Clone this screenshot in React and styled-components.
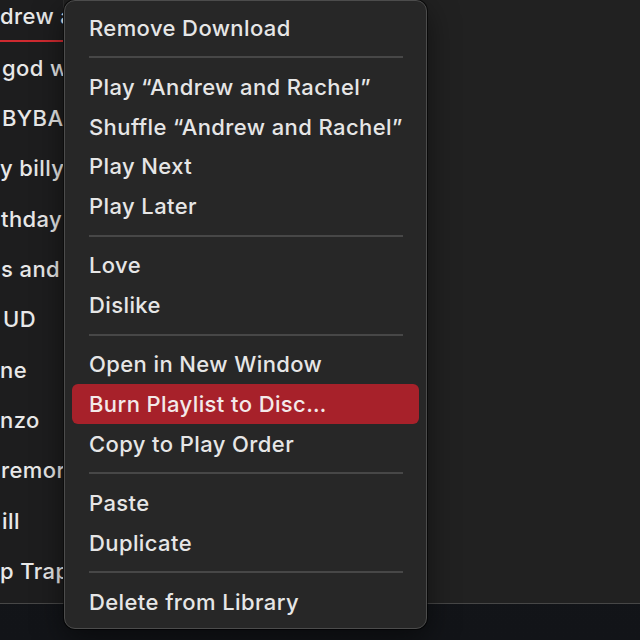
import React from "react";
import styled, { createGlobalStyle } from "styled-components";

const Global = createGlobalStyle`
  html, body { margin: 0; padding: 0; }
  body {
    width: 640px;
    height: 640px;
    overflow: hidden;
    background: #16181c;
    font-family: Inter, "Noto Sans", "Liberation Sans", sans-serif;
    -webkit-font-smoothing: antialiased;
  }
`;

const Screen = styled.div`
  position: relative;
  width: 640px;
  height: 640px;
  background: linear-gradient(180deg, #16181c 0%, #121418 100%);
`;

const Window = styled.div`
  display: flex;
  height: 603px;
  background: #212121;
  border-bottom: 1px solid #474747;
  overflow: hidden;
`;

const ListPanel = styled.div`
  width: 63px;
  flex: none;
  background: #1d1d1e;
  border-right: 1px solid #2c2c2c;
  overflow: hidden;
`;

const List = styled.div`
  display: flex;
  flex-direction: column;
  margin-top: -8px;
`;

const ListRow = styled.div`
  height: 50.35px;
  flex: none;
  display: flex;
  align-items: center;
  padding-left: ${(p) => p.$indent}px;
  box-sizing: border-box;
  white-space: nowrap;
  color: #e8e8e8;
  font-size: 22px;
  font-weight: 450;
  letter-spacing: 0.4px;
  box-shadow: ${(p) => (p.$selected ? "inset 0 -2px 0 #cf2a30" : "none")};
  padding-bottom: ${(p) => (p.$selected ? "2px" : "0")};
`;

const Main = styled.div`
  flex: 1;
  background: #212121;
`;

const Menu = styled.div`
  position: absolute;
  left: 64px;
  top: 0;
  width: 363px;
  height: 629px;
  box-sizing: border-box;
  padding: 7px 7px 0 7px;
  background: #272727;
  border: 1px solid #4c4c4c;
  border-radius: 11px;
  box-shadow: 0 0 0 1px rgba(0, 0, 0, 0.6), 0 10px 30px rgba(0, 0, 0, 0.5);
  display: flex;
  flex-direction: column;
`;

const Item = styled.div`
  height: 39.6px;
  flex: none;
  display: flex;
  align-items: center;
  padding-left: 17px;
  border-radius: 6px;
  white-space: nowrap;
  font-size: 22px;
  font-weight: 450;
  letter-spacing: 0.4px;
  color: ${(p) => (p.$active ? "#f3e9e9" : "#e6e6e6")};
  background: ${(p) => (p.$active ? "#a7212a" : "transparent")};
`;

const Separator = styled.div`
  height: 19.8px;
  flex: none;
  display: flex;
  align-items: center;
  padding: 0 16px 0 17px;
  &::after {
    content: "";
    flex: 1;
    height: 2px;
    background: #474747;
  }
`;

const listRows = [
  { t: "drew and Rachel", i: 0, s: true },
  { t: "god will", i: 2 },
  { t: "BYBABY", i: 2 },
  { t: "y billy", i: 0 },
  { t: "thday", i: 1 },
  { t: "s and", i: 1 },
  { t: "UD", i: 3 },
  { t: "ne", i: 0 },
  { t: "nzo", i: 0 },
  { t: "remorse", i: 1 },
  { t: "ill", i: 2 },
  { t: "p Trap", i: 0 },
];

const menu = [
  ["Remove Download"],
  null,
  ["Play \u201CAndrew and Rachel\u201D"],
  ["Shuffle \u201CAndrew and Rachel\u201D"],
  ["Play Next"],
  ["Play Later"],
  null,
  ["Love"],
  ["Dislike"],
  null,
  ["Open in New Window"],
  ["Burn Playlist to Disc\u2026", true],
  ["Copy to Play Order"],
  null,
  ["Paste"],
  ["Duplicate"],
  null,
  ["Delete from Library"],
];

export default function App() {
  return (
    <Screen>
      <Global />
      <Window>
        <ListPanel>
          <List>
            {listRows.map((r, k) => (
              <ListRow key={k} $indent={r.i} $selected={r.s}>
                {r.t}
              </ListRow>
            ))}
          </List>
        </ListPanel>
        <Main />
      </Window>
      <Menu>
        {menu.map((m, k) =>
          m ? (
            <Item key={k} $active={m[1]}>
              {m[0]}
            </Item>
          ) : (
            <Separator key={k} />
          )
        )}
      </Menu>
    </Screen>
  );
}
